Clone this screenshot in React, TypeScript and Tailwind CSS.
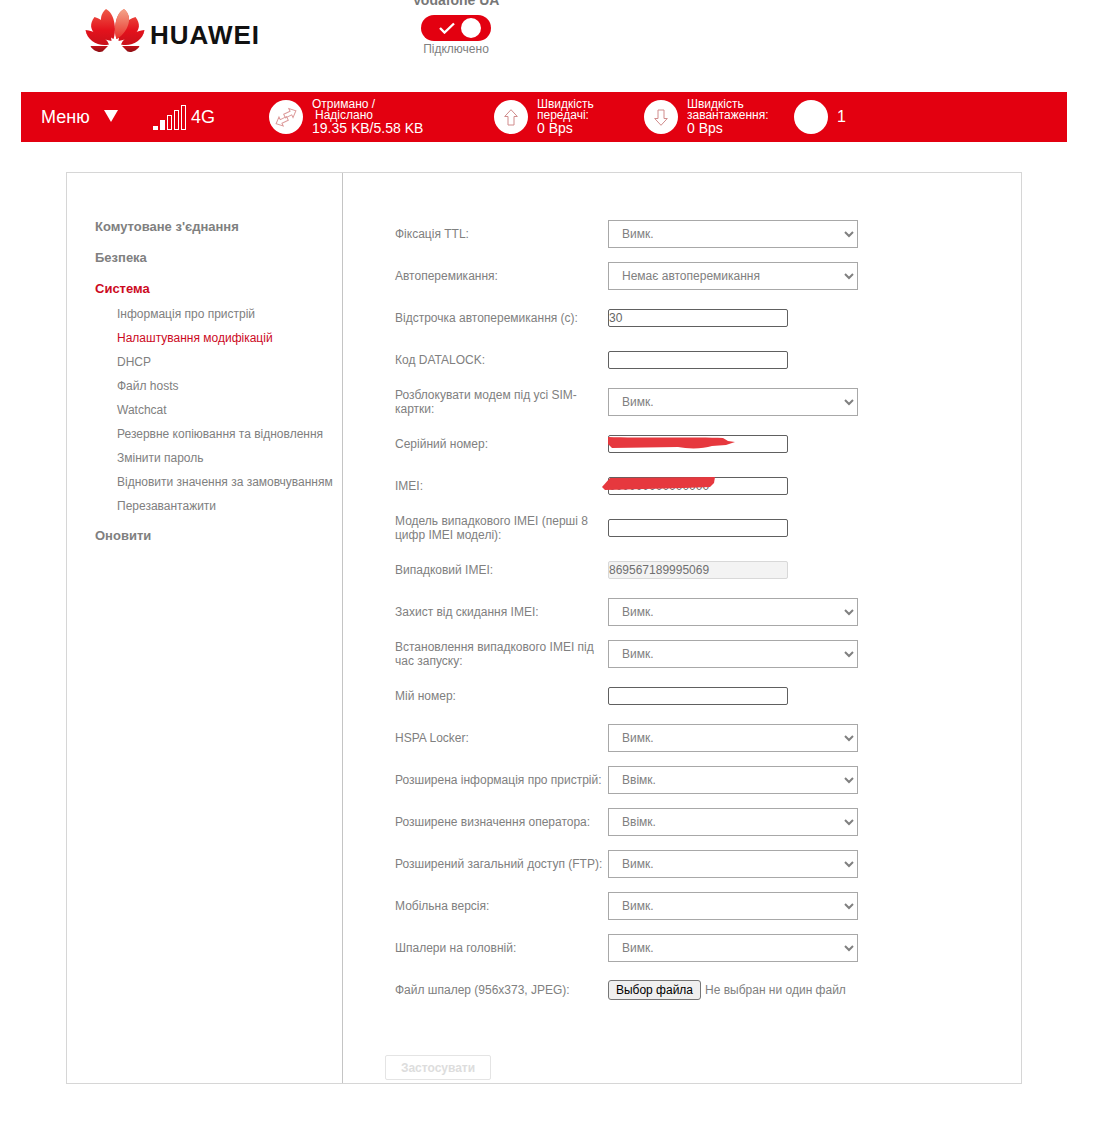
import React from 'react';

const sideSub = [
  'Інформація про пристрій',
  'Налаштування модифікацій',
  'DHCP',
  'Файл hosts',
  'Watchcat',
  'Резервне копіювання та відновлення',
  'Змінити пароль',
  'Відновити значення за замовчуванням',
  'Перезавантажити',
];

type Row =
  | { label: string; kind: 'select'; value: string }
  | { label: string; kind: 'input'; value?: string; disabled?: boolean; scribble?: 'serial' | 'imei' }
  | { label: string; kind: 'file' };

const rows: Row[] = [
  { label: 'Фіксація TTL:', kind: 'select', value: 'Вимк.' },
  { label: 'Автоперемикання:', kind: 'select', value: 'Немає автоперемикання' },
  { label: 'Відстрочка автоперемикання (с):', kind: 'input', value: '30' },
  { label: 'Код DATALOCK:', kind: 'input' },
  { label: 'Розблокувати модем під усі SIM-картки:', kind: 'select', value: 'Вимк.' },
  { label: 'Серійний номер:', kind: 'input', scribble: 'serial' },
  { label: 'IMEI:', kind: 'input', value: '000000000000000', scribble: 'imei' },
  { label: 'Модель випадкового IMEI (перші 8 цифр IMEI моделі):', kind: 'input' },
  { label: 'Випадковий IMEI:', kind: 'input', value: '869567189995069', disabled: true },
  { label: 'Захист від скидання IMEI:', kind: 'select', value: 'Вимк.' },
  { label: 'Встановлення випадкового IMEI під час запуску:', kind: 'select', value: 'Вимк.' },
  { label: 'Мій номер:', kind: 'input' },
  { label: 'HSPA Locker:', kind: 'select', value: 'Вимк.' },
  { label: 'Розширена інформація про пристрій:', kind: 'select', value: 'Ввімк.' },
  { label: 'Розширене визначення оператора:', kind: 'select', value: 'Ввімк.' },
  { label: 'Розширений загальний доступ (FTP):', kind: 'select', value: 'Вимк.' },
  { label: 'Мобільна версія:', kind: 'select', value: 'Вимк.' },
  { label: 'Шпалери на головній:', kind: 'select', value: 'Вимк.' },
  { label: 'Файл шпалер (956x373, JPEG):', kind: 'file' },
];

function HuaweiLogo() {
  const petals = (
    <>
      <path d="M33.5 35 C24 30 15 14 26 5 C34 9 37 24 33.5 35 Z" />
      <path d="M31.5 37 C20 35 4 27 14.5 13 C24 15 31 26 31.5 37 Z" />
      <path d="M29 40.5 C19 43 7 37 5.5 26 C14 27 26 32 29 40.5 Z" />
      <path d="M28 42 L10.5 42 C13 47 19 49 22.5 47.5 Z" />
    </>
  );
  return (
    <svg width="70" height="52" viewBox="0 0 70 52" className="shrink-0">
      <defs>
        <linearGradient id="petal" gradientUnits="userSpaceOnUse" x1="0" y1="5" x2="0" y2="48">
          <stop offset="0" stopColor="#ee5a48" />
          <stop offset="0.5" stopColor="#e3121c" />
          <stop offset="0.85" stopColor="#c8101a" />
          <stop offset="1" stopColor="#8c0f14" />
        </linearGradient>
        <linearGradient id="petalLight" gradientUnits="userSpaceOnUse" x1="0" y1="5" x2="0" y2="35">
          <stop offset="0" stopColor="#f4a68a" />
          <stop offset="1" stopColor="#e8302a" />
        </linearGradient>
      </defs>
      <g fill="url(#petal)">{petals}</g>
      <g fill="url(#petal)" transform="translate(70 0) scale(-1 1)">{petals}</g>
      <path d="M36.5 35 C46 30 55 14 44 5 C36 9 33 24 36.5 35 Z" fill="url(#petalLight)" />
    </svg>
  );
}

function StatCircle({ children }: { children?: React.ReactNode }) {
  return (
    <div className="flex h-[34px] w-[34px] shrink-0 items-center justify-center rounded-full bg-white">{children}</div>
  );
}

function SignalBars() {
  return (
    <div className="flex h-[25px] items-end gap-[2px]">
      <div className="h-[4px] w-[5px] bg-white" />
      <div className="h-[10px] w-[5px] bg-white" />
      <div className="h-[15px] w-[5px] border border-white" />
      <div className="h-[20px] w-[5px] border border-white" />
      <div className="h-[25px] w-[5px] border border-white" />
    </div>
  );
}

const arrowShape = 'M-6 -2 L1 -2 L1 -5 L6.5 0 L1 5 L1 2 L-6 2 Z';

function StatusBar() {
  return (
    <div className="mx-[21px] flex h-[50px] w-[1046px] items-center bg-[#e30010] text-white">
      <span className="ml-[20px] w-[63px] text-[18px]">Меню</span>
      <div className="mb-[2px] h-0 w-0 border-x-[7px] border-t-[12px] border-x-transparent border-t-white" />
      <div className="ml-[35px]"><SignalBars /></div>
      <span className="ml-[5px] w-[78px] text-[18px]">4G</span>
      <StatCircle>
        <svg width="26" height="26" viewBox="0 0 26 26" fill="none" stroke="#dc9a9a" strokeWidth="1">
          <path d={arrowShape} transform="translate(17 9.5) rotate(-25)" />
          <path d={arrowShape} transform="translate(9 17) rotate(155)" />
        </svg>
      </StatCircle>
      <div className="ml-[9px] w-[182px] text-[12px] leading-[11px]">
        <div>Отримано /</div>
        <div className="pl-[3px]">Надіслано</div>
        <div className="text-[14px] leading-[14px]">19.35 KB/5.58 KB</div>
      </div>
      <StatCircle>
        <svg width="14" height="17" viewBox="0 0 14 17" fill="none" stroke="#d08c8c" strokeWidth="1">
          <path d="M7 0.7 L13.3 7.5 L10 7.5 L10 16 L4 16 L4 7.5 L0.7 7.5 Z" />
        </svg>
      </StatCircle>
      <div className="ml-[9px] w-[107px] text-[12px] leading-[11px]">
        <div>Швидкість</div>
        <div>передачі:</div>
        <div className="text-[14px] leading-[14px]">0 Bps</div>
      </div>
      <StatCircle>
        <svg width="14" height="17" viewBox="0 0 14 17" fill="none" stroke="#d08c8c" strokeWidth="1">
          <path d="M7 16.3 L13.3 9.5 L10 9.5 L10 1 L4 1 L4 9.5 L0.7 9.5 Z" />
        </svg>
      </StatCircle>
      <div className="ml-[9px] w-[107px] text-[12px] leading-[11px]">
        <div>Швидкість</div>
        <div>завантаження:</div>
        <div className="text-[14px] leading-[14px]">0 Bps</div>
      </div>
      <StatCircle />
      <span className="ml-[9px] text-[16px]">1</span>
    </div>
  );
}

function Scribble({ kind }: { kind: 'serial' | 'imei' }) {
  if (kind === 'serial') {
    return (
      <svg className="absolute left-0 top-[1px]" width="128" height="15" viewBox="0 0 128 15">
        <path d="M0 1 C30 2 90 1 115 2 L120 5 L127 6 L118 9 L104 10 C95 13 80 13 70 11 L4 12 L0 8 Z" fill="#e6383e" />
      </svg>
    );
  }
  return (
    <svg className="absolute left-[-6px] top-0" width="114" height="15" viewBox="0 0 114 15">
      <path d="M8 1 L113 0 L112 6 L108 10 L82 11 L3 13 L0 10 Z" fill="#e6383e" />
    </svg>
  );
}

function Control({ row }: { row: Row }) {
  if (row.kind === 'select') {
    return (
      <select
        defaultValue={row.value}
        className="h-[28px] w-[250px] rounded-none border border-[#a8a8a8] bg-white pl-[9px] text-[12px] text-[#808080]"
      >
        <option>{row.value}</option>
      </select>
    );
  }
  if (row.kind === 'file') {
    return (
      <div className="flex items-center">
        <button className="h-[20px] w-[93px] rounded-[3px] border border-[#767676] bg-[#efefef] text-[12px] text-black">
          Выбор файла
        </button>
        <span className="ml-[4px] text-[12px] text-[#808080]">Не выбран ни один файл</span>
      </div>
    );
  }
  return (
    <div className="relative w-[180px]">
      <input
        readOnly
        defaultValue={row.value}
        className={
          row.disabled
            ? 'block h-[18px] w-[180px] rounded-[2px] border border-[#d8d8d8] bg-[#f3f3f3] text-[12px] text-[#707070]'
            : 'block h-[18px] w-[180px] rounded-[2px] border border-[#606060] bg-white text-[12px] text-[#666666]'
        }
      />
      {row.kind === 'input' && row.scribble ? <Scribble kind={row.scribble} /> : null}
    </div>
  );
}

export default function App() {
  return (
    <div className="min-h-[1133px] w-[1108px] overflow-hidden bg-white font-['Liberation_Sans',Arial,sans-serif]">
      <div className="flex h-[92px]">
        <div className="ml-[80px] mt-[4px] flex h-[52px] w-[183px] items-center">
          <HuaweiLogo />
          <span className="mt-[10px] text-[26px] font-bold tracking-[1px] text-[#111111]">HUAWEI</span>
        </div>
        <div className="ml-[143px] mt-[-10px] flex w-[100px] flex-col items-center">
          <span className="h-[25px] whitespace-nowrap text-[14px] font-bold leading-[20px] text-[#777777]">Vodafone UA</span>
          <div className="flex h-[26px] w-[70px] items-center justify-end rounded-full bg-[#e30010] pr-[10px]">
            <svg width="16" height="12" viewBox="0 0 16 12" fill="none" stroke="white" strokeWidth="2.4" className="mr-[6px]">
              <path d="M1 6 L5.5 10.5 L15 1.5" />
            </svg>
            <div className="h-[20px] w-[20px] rounded-full bg-white" />
          </div>
          <span className="mt-[1px] text-[12px] leading-[14px] text-[#808080]">Підключено</span>
        </div>
      </div>
      <StatusBar />
      <div className="ml-[66px] mt-[30px] flex h-[912px] w-[956px] border border-[#d6d6d6]">
        <div className="w-[276px] shrink-0 border-r border-[#c4c4c4] pl-[28px] pt-[46px]">
          <div className="h-[31px] text-[13px] font-bold leading-[15px] text-[#808080]">Комутоване з'єднання</div>
          <div className="h-[31px] text-[13px] font-bold leading-[15px] text-[#808080]">Безпека</div>
          <div className="h-[21px] text-[13px] font-bold leading-[15px] text-[#cc0a1e]">Система</div>
          <div className="flex flex-col pl-[22px]">
            {sideSub.map((s) => (
              <div
                key={s}
                className={
                  s === 'Налаштування модифікацій'
                    ? 'h-[24px] whitespace-nowrap text-[12px] leading-[24px] text-[#cc0a1e]'
                    : 'h-[24px] whitespace-nowrap text-[12px] leading-[24px] text-[#808080]'
                }
              >
                {s}
              </div>
            ))}
          </div>
          <div className="mt-[10px] text-[13px] font-bold leading-[15px] text-[#808080]">Оновити</div>
        </div>
        <div className="flex flex-1 flex-col pl-[52px] pt-[40px]">
          {rows.map((row) => (
            <div key={row.label} className="flex h-[42px] items-center">
              <label className="w-[213px] shrink-0 pr-[4px] text-[12px] leading-[14px] text-[#808080]">{row.label}</label>
              <Control row={row} />
            </div>
          ))}
          <button className="ml-[-10px] mt-[44px] h-[25px] w-[106px] rounded-[2px] border border-[#e4e4e4] bg-white text-[12px] font-bold text-[#dddddd]">
            Застосувати
          </button>
        </div>
      </div>
    </div>
  );
}
